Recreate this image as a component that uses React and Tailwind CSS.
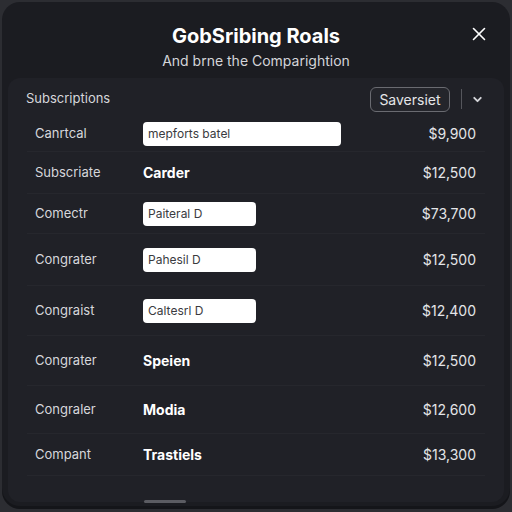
import React from "react";
import { X, ChevronDown } from "lucide-react";

const rows = [
  { label: "Canrtcal", kind: "input", value: "mepforts batel", wide: true, price: "$9,900", h: "h-[36px]" },
  { label: "Subscriate", kind: "bold", value: "Carder", price: "$12,500", h: "h-[42px]" },
  { label: "Comectr", kind: "input", value: "Paiteral D", price: "$73,700", h: "h-[40px]" },
  { label: "Congrater", kind: "input", value: "Pahesil D", price: "$12,500", h: "h-[52px]" },
  { label: "Congraist", kind: "input", value: "Caltesrl D", price: "$12,400", h: "h-[50px]" },
  { label: "Congrater", kind: "bold", value: "Speien", price: "$12,500", h: "h-[50px]" },
  { label: "Congraler", kind: "bold", value: "Modia", price: "$12,600", h: "h-[48px]" },
  { label: "Compant", kind: "bold", value: "Trastiels", price: "$13,300", h: "h-[42px]" },
];

const Row = ({ row }) => (
  <div className={`flex items-center border-b border-[#26272d] ${row.h}`}>
    <div className="w-[116px] pl-[8px] text-[13px] text-[#d6d7db]">{row.label}</div>
    <div className="flex-1">
      {row.kind === "input" ? (
        <div
          className={`flex items-center h-[24px] bg-white rounded-[4px] pl-[5px] text-[12px] text-[#3a3b40] ${row.wide ? "w-[198px]" : "w-[113px]"}`}
        >
          {row.value}
        </div>
      ) : (
        <div className="text-[14px] font-bold text-white">{row.value}</div>
      )}
    </div>
    <div className="pr-[9px] text-[14px] text-[#e4e5e8]">{row.price}</div>
  </div>
);

export default function App() {
  return (
    <div
      className="w-[512px] h-[512px] bg-[#2c2d32] pt-[2px] px-[2px] overflow-hidden"
      style={{ fontFamily: "Inter, 'Noto Sans', sans-serif" }}
    >
      <div className="relative h-[504px] rounded-[18px] bg-[#1b1c21] px-[6px] pt-[22px] flex flex-col shadow-[0_3px_0_#141519]">
        <button className="absolute right-[20px] top-[21px] text-white">
          <X size={22} strokeWidth={1.75} />
        </button>
        <h1 className="text-center text-[20px] leading-[24px] font-bold text-white">GobSribing Roals</h1>
        <p className="mt-[4px] text-center text-[14px] leading-[18px] text-[#d4d5d9]">And brne the Comparightion</p>

        <div className="mt-[8px] flex-1 mb-[4px] rounded-[12px] bg-[#202127] flex flex-col">
          <div className="flex items-center h-[38px] pl-[18px] pr-[20px] pt-[4px]">
            <span className="flex-1 text-[13px] text-[#d6d7db]">Subscriptions</span>
            <button className="h-[25px] w-[80px] rounded-[6px] border border-[#6a6b71] bg-[#24252b] text-[14px] text-[#e4e5e8]">
              Saversiet
            </button>
            <span className="ml-[11px] w-px h-[20px] bg-[#55565c]" />
            <ChevronDown size={13} strokeWidth={3.5} className="ml-[9px] text-[#d4d5d9]" />
          </div>
          <div className="px-[19px]">
            {rows.map((r, i) => (
              <Row key={i} row={r} />
            ))}
          </div>
          <div className="flex-1 flex items-end pl-[136px]">
            <div className="w-[42px] h-[3px] rounded-full bg-[#5b5c62] mb-[-1px]" />
          </div>
        </div>
      </div>
    </div>
  );
}
